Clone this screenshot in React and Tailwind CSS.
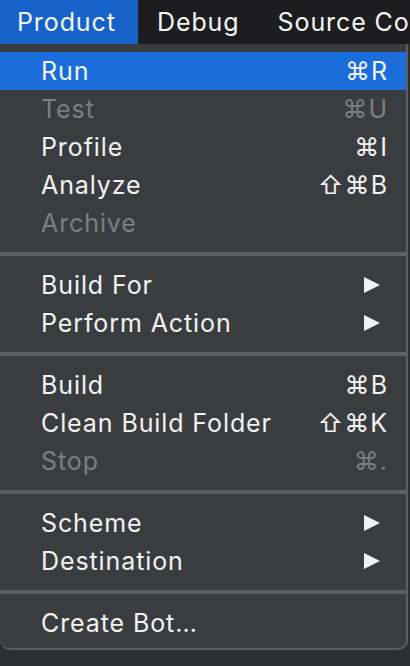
import React from "react";

const items = [
  { type: "item", label: "Run", shortcut: "⌘R", active: true },
  { type: "item", label: "Test", shortcut: "⌘U", disabled: true },
  { type: "item", label: "Profile", shortcut: "⌘I" },
  { type: "item", label: "Analyze", shortcut: "⇧⌘B" },
  { type: "item", label: "Archive", disabled: true },
  { type: "sep" },
  { type: "item", label: "Build For", submenu: true },
  { type: "item", label: "Perform Action", submenu: true },
  { type: "sep" },
  { type: "item", label: "Build", shortcut: "⌘B" },
  { type: "item", label: "Clean Build Folder", shortcut: "⇧⌘K" },
  { type: "item", label: "Stop", shortcut: "⌘.", disabled: true },
  { type: "sep" },
  { type: "item", label: "Scheme", submenu: true },
  { type: "item", label: "Destination", submenu: true },
  { type: "sep" },
  { type: "item", label: "Create Bot…" },
];

function Arrow() {
  return (
    <svg width="18" height="18" viewBox="0 0 18 18" className="block">
      <polygon points="1,1 17,9 1,17" fill="currentColor" />
    </svg>
  );
}

function Row({ item }) {
  const color = item.disabled ? "text-[#7c7e80]" : "text-[#f2f2f2]";
  return (
    <div
      className={`flex h-[38px] items-center pl-[41px] pr-[21px] ${color} ${
        item.active ? "bg-[#1b6ddb]" : ""
      }`}
    >
      <span className="flex-1 whitespace-nowrap">{item.label}</span>
      {item.shortcut && (
        <span className="mr-[-3px] whitespace-nowrap tracking-[1px]">{item.shortcut}</span>
      )}
      {item.submenu && (
        <span className="mr-[4px]">
          <Arrow />
        </span>
      )}
    </div>
  );
}

export default function App() {
  return (
    <div className="relative h-[666px] w-[410px] overflow-hidden bg-[#2d2f31] text-[25px] leading-none tracking-[0.9px] [font-family:Inter,'DejaVu_Sans',sans-serif]">
      <div className="flex h-[44px] items-center bg-[#1d1d1f] text-[#f5f5f5]">
        <div className="flex h-full w-[138px] shrink-0 items-center bg-[#1662c9] pl-[17px]">
          Product
        </div>
        <div className="shrink-0 pl-[19px]">Debug</div>
        <div className="shrink-0 whitespace-nowrap pl-[38px]">Source Control</div>
      </div>
      <div className="w-[408px] overflow-hidden rounded-b-[10px] border-r-2 border-b-2 border-[#5b5e60] bg-[#3a3d3f] pt-[8px] pb-[6px]">
        {items.map((item, i) =>
          item.type === "sep" ? (
            <div key={i} className="pt-[10px] pb-[10px]">
              <div className="h-[4px] bg-[#5c6062]" />
            </div>
          ) : (
            <Row key={i} item={item} />
          )
        )}
      </div>
    </div>
  );
}
